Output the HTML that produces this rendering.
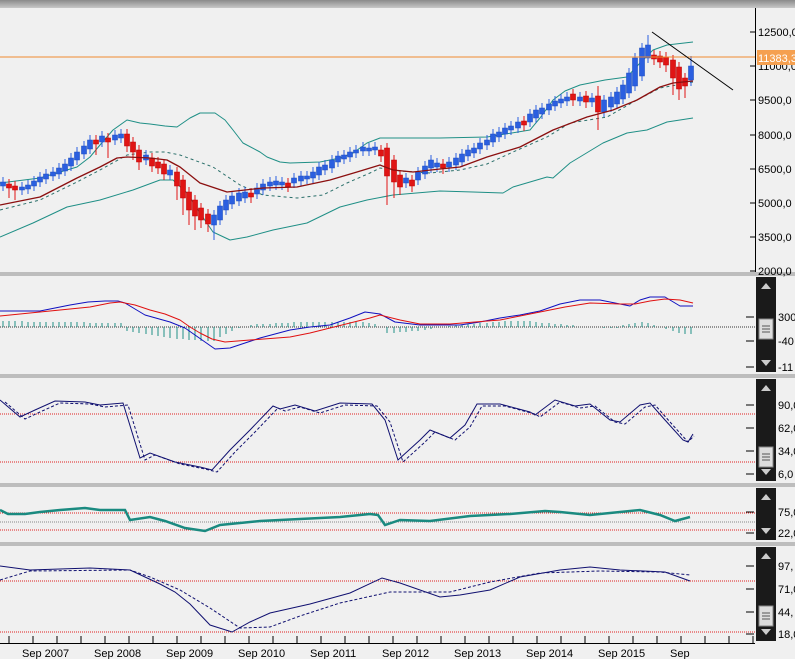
<!DOCTYPE html>
<html><head><meta charset="utf-8"><style>
html,body{margin:0;padding:0;background:#f0f0f0;}
svg{display:block;font-family:"Liberation Sans",sans-serif;}
</style></head><body>
<svg width="795" height="659" xmlns="http://www.w3.org/2000/svg" font-family="Liberation Sans, sans-serif" font-size="11">
<defs><linearGradient id="tg" x1="0" y1="0" x2="0" y2="1"><stop offset="0" stop-color="#8a8a8a"/><stop offset="1" stop-color="#c8c8c8"/></linearGradient></defs>
<rect width="795" height="659" fill="#f0f0f0"/>
<rect width="795" height="8" fill="url(#tg)"/>
<rect x="0" y="272" width="795" height="4" fill="#bdbdbd"/>
<rect x="0" y="374" width="795" height="4" fill="#bdbdbd"/>
<rect x="0" y="483" width="795" height="4" fill="#bdbdbd"/>
<rect x="0" y="542" width="795" height="4" fill="#bdbdbd"/>

<g fill="none" stroke-width="1" stroke-linejoin="round">
<polyline stroke="#1f8f86" points="0,183 40,178 77,167 90,157 100,145 113,130 127,120 140,123 150,124 165,126 177,127 190,118 200,113 215,113 225,120 233,130 243,143 260,152 267,157 280,162 290,163 320,162 340,158 353,153 367,143 380,138 440,138 487,137 530,130 540,118 553,100 565,91 580,85 605,80 627,77 640,63 653,50 667,45 693,42"/>
<polyline stroke="#1f8f86" points="0,237 33,223 67,207 100,200 133,190 160,180 173,180 187,193 200,213 213,232 230,240 247,237 273,230 307,223 340,207 367,200 393,195 440,191 473,192 503,193 513,187 547,177 553,178 570,163 603,143 627,133 647,130 667,122 693,118"/>
<polyline stroke="#2a6f6a" stroke-dasharray="3,3" points="0,210 40,200 77,182 100,170 127,155 150,152 165,152 180,155 213,167 240,185 263,195 297,198 323,195 347,183 370,173 380,168 400,171 430,173 460,170 487,164 513,152 547,137 570,123 607,117 637,100 660,88 693,82"/>
</g>

<path stroke="#2b5fe0" fill="none" d="M3,177V191M22,182V195M28,180V194M34,176V191M40,172V187M46,169V184M53,167V181M59,163V179M65,159V176M71,153V171M77,147V165M84,141V159M90,135V154M102,131V147M115,130V145M121,129V143M146,150V165M170,165V180M214,210V240M220,201V225M226,195V215M232,191V209M239,188V206M245,187V203M257,183V199M263,179V195M270,177V191M276,176V190M282,177V190M294,173V188M301,171V186M307,171V184M313,167V183M319,162V180M325,160V175M332,155V173M338,151V167M344,150V164M350,147V162M356,145V158M363,142V156M369,143V156M375,142V155M406,173V188M418,167V185M425,161V179M431,155V173M437,158V172M449,157V172M456,153V170M462,149V167M468,145V161M474,143V158M480,138V154M487,135V150M493,129V147M499,127V142M505,123V139M511,121V135M518,117V133M530,109V127M536,105V123M542,103V119M549,99V115M555,96V111M561,94V108M567,92V106M580,92V106M592,93V107M604,95V117M611,92V112M617,87V109M623,80V104M629,68V98M635,53V91M642,43V81M648,35V63M691,56V86"/>
<path stroke="#e01515" fill="none" d="M9,179V198M15,181V200M96,135V155M108,133V158M127,129V152M133,137V160M139,145V170M152,153V172M158,157V174M164,159V180M177,167V200M183,175V215M189,187V225M195,195V230M201,203V228M208,209V232M251,188V203M288,178V192M381,145V162M387,143V205M394,155V198M400,170V195M412,175V192M443,159V174M524,116V131M573,89V106M586,91V108M598,86V130M654,50V65M660,51V68M666,52V72M673,55V95M679,62V100M685,73V98"/>
<path fill="#2b5fe0" stroke="#1e4fc0" stroke-width="0.6" d="M0.5,182h5v4h-5zM19.5,187h5v3h-5zM25.5,185h5v4h-5zM31.5,181h5v5h-5zM37.5,177h5v5h-5zM43.5,174h5v5h-5zM50.5,172h5v4h-5zM56.5,168h5v6h-5zM62.5,164h5v7h-5zM68.5,158h5v8h-5zM74.5,152h5v8h-5zM81.5,146h5v8h-5zM87.5,140h5v9h-5zM99.5,136h5v6h-5zM112.5,135h5v5h-5zM118.5,134h5v4h-5zM143.5,155h5v5h-5zM167.5,170h5v5h-5zM211.5,215h5v10h-5zM217.5,206h5v14h-5zM223.5,200h5v10h-5zM229.5,196h5v8h-5zM236.5,193h5v8h-5zM242.5,192h5v6h-5zM254.5,188h5v6h-5zM260.5,184h5v6h-5zM267.5,182h5v4h-5zM273.5,181h5v4h-5zM279.5,182h5v3h-5zM291.5,178h5v5h-5zM298.5,176h5v5h-5zM304.5,176h5v3h-5zM310.5,172h5v6h-5zM316.5,167h5v8h-5zM322.5,165h5v5h-5zM329.5,160h5v8h-5zM335.5,156h5v6h-5zM341.5,155h5v4h-5zM347.5,152h5v5h-5zM353.5,150h5v3h-5zM360.5,147h5v4h-5zM366.5,148h5v3h-5zM372.5,147h5v3h-5zM403.5,178h5v5h-5zM415.5,172h5v8h-5zM422.5,166h5v8h-5zM428.5,160h5v8h-5zM434.5,163h5v4h-5zM446.5,162h5v5h-5zM453.5,158h5v7h-5zM459.5,154h5v8h-5zM465.5,150h5v6h-5zM471.5,148h5v5h-5zM477.5,143h5v6h-5zM484.5,140h5v5h-5zM490.5,134h5v8h-5zM496.5,132h5v5h-5zM502.5,128h5v6h-5zM508.5,126h5v4h-5zM515.5,122h5v6h-5zM527.5,114h5v8h-5zM533.5,110h5v8h-5zM539.5,108h5v6h-5zM546.5,104h5v6h-5zM552.5,101h5v5h-5zM558.5,99h5v4h-5zM564.5,97h5v4h-5zM577.5,97h5v4h-5zM589.5,98h5v4h-5zM601.5,100h5v12h-5zM608.5,97h5v10h-5zM614.5,92h5v12h-5zM620.5,85h5v14h-5zM626.5,73h5v20h-5zM632.5,58h5v28h-5zM639.5,48h5v28h-5zM645.5,45h5v13h-5zM688.5,66h5v14h-5z"/>
<path fill="#e01515" stroke="#c00000" stroke-width="0.6" d="M6.5,184h5v4h-5zM12.5,186h5v4h-5zM93.5,140h5v4h-5zM105.5,138h5v4h-5zM124.5,134h5v12h-5zM130.5,142h5v10h-5zM136.5,150h5v12h-5zM149.5,158h5v8h-5zM155.5,162h5v6h-5zM161.5,164h5v10h-5zM174.5,172h5v14h-5zM180.5,180h5v18h-5zM186.5,192h5v18h-5zM192.5,200h5v16h-5zM198.5,208h5v12h-5zM205.5,214h5v10h-5zM248.5,193h5v4h-5zM285.5,183h5v4h-5zM378.5,150h5v6h-5zM384.5,148h5v28h-5zM391.5,160h5v22h-5zM397.5,175h5v12h-5zM409.5,180h5v6h-5zM440.5,164h5v4h-5zM521.5,121h5v4h-5zM570.5,94h5v6h-5zM583.5,96h5v6h-5zM595.5,96h5v16h-5zM651.5,55h5v4h-5zM657.5,56h5v6h-5zM663.5,57h5v8h-5zM670.5,60h5v18h-5zM676.5,67h5v22h-5zM682.5,78h5v8h-5z"/>

<polyline fill="none" stroke="#8b0f0f" stroke-width="1.3" stroke-linejoin="round" points="0,205 40,197 77,178 100,167 117,158 127,157 150,158 167,160 180,167 200,183 227,192 263,188 297,187 330,180 357,172 380,165 393,170 413,172 440,169 460,167 487,157 520,147 553,130 587,117 613,110 637,100 660,87 673,83 693,81"/>
<line x1="0" y1="57" x2="755" y2="57" stroke="#f08a30"/>
<line x1="652" y1="32" x2="733" y2="90" stroke="#000"/>

<line x1="755.5" y1="8" x2="755.5" y2="272" stroke="#000"/>
<g stroke="#000"><line x1="750" y1="32" x2="756" y2="32"/><line x1="750" y1="66" x2="756" y2="66"/><line x1="750" y1="100" x2="756" y2="100"/><line x1="750" y1="135" x2="756" y2="135"/><line x1="750" y1="169" x2="756" y2="169"/><line x1="750" y1="203" x2="756" y2="203"/><line x1="750" y1="237" x2="756" y2="237"/><line x1="750" y1="271" x2="756" y2="271"/></g>
<g fill="#000"><text x="758" y="36">12500,0</text><text x="758" y="70">11000,0</text><text x="758" y="104">9500,0</text><text x="758" y="139">8000,0</text><text x="758" y="173">6500,0</text><text x="758" y="207">5000,0</text><text x="758" y="241">3500,0</text><text x="758" y="275">2000,0</text></g>
<rect x="757" y="50" width="38" height="15" fill="#f5a050"/>
<text x="758" y="62" fill="#fff">11383,3</text>

<g>
<rect x="756" y="277" width="20" height="95" fill="#1a1a1a"/><polygon points="761,289 766,283 771,289" fill="#ccc"/><polygon points="761,360 766,366 771,360" fill="#ccc"/>
<rect x="759" y="319" width="14" height="20" fill="#ddd" stroke="#888"/><path d="M762,326h8M762,329h8M762,332h8" stroke="#555"/>
<rect x="756" y="379" width="20" height="102" fill="#1a1a1a"/><polygon points="761,391 766,385 771,391" fill="#ccc"/><polygon points="761,469 766,475 771,469" fill="#ccc"/>
<rect x="759" y="447" width="14" height="20" fill="#ddd" stroke="#888"/><path d="M762,454h8M762,457h8M762,460h8" stroke="#555"/>
<rect x="756" y="488" width="20" height="52" fill="#1a1a1a"/><polygon points="761,500 766,494 771,500" fill="#ccc"/><polygon points="761,528 766,534 771,528" fill="#ccc"/>
<rect x="756" y="547" width="20" height="94" fill="#1a1a1a"/><polygon points="761,559 766,553 771,559" fill="#ccc"/><polygon points="761,629 766,635 771,629" fill="#ccc"/>
<rect x="759" y="606" width="14" height="20" fill="#ddd" stroke="#888"/><path d="M762,613h8M762,616h8M762,619h8" stroke="#555"/>
</g>
<g stroke="#000"><path d="M746,317h8M746,341h8M746,367h8M746,405h8M746,428h8M746,451h8M746,474h8M746,512h8M746,533h8M746,566h8M746,589h8M746,612h8M746,634h8"/></g>
<g fill="#000"><text x="778" y="321">300</text><text x="778" y="345">-40</text><text x="778" y="371">-11</text>
<text x="778" y="409">90,0</text><text x="778" y="432">62,0</text><text x="778" y="455">34,0</text><text x="778" y="478">6,0</text>
<text x="778" y="516">75,0</text><text x="778" y="537">22,0</text>
<text x="778" y="570">97,</text><text x="778" y="593">71,0</text><text x="778" y="616">44,</text><text x="778" y="638">18,0</text></g>

<line x1="0" y1="327" x2="755" y2="327" stroke="#333" stroke-dasharray="1,1"/>
<path stroke="#1f8f86" fill="none" d="M3,327v-6M9,327v-6M15,327v-6M22,327v-6M28,327v-5M34,327v-5M40,327v-5M46,327v-5M53,327v-5M59,327v-5M65,327v-5M71,327v-5M77,327v-5M84,327v-5M90,327v-4M96,327v-4M102,327v-4M108,327v-4M115,327v-4M121,327v-4M127,327v4M133,327v5M139,327v6M146,327v7M152,327v8M158,327v9M164,327v10M170,327v11M177,327v12M183,327v12M189,327v13M195,327v13M201,327v14M208,327v14M214,327v14M220,327v10M226,327v7M232,327v4M239,327v1M251,327v-2M257,327v-3M263,327v-3M270,327v-3M276,327v-4M282,327v-4M288,327v-4M294,327v-5M301,327v-5M307,327v-5M313,327v-5M319,327v-5M325,327v-5M332,327v-5M338,327v-5M344,327v-5M350,327v-5M356,327v-5M363,327v-5M369,327v-4M375,327v-3M387,327v6M394,327v6M400,327v5M406,327v5M412,327v4M418,327v4M425,327v3M431,327v2M449,327v-1M456,327v-2M462,327v-2M468,327v-3M474,327v-3M480,327v-4M487,327v-4M493,327v-5M499,327v-5M505,327v-6M511,327v-6M518,327v-6M524,327v-6M530,327v-6M536,327v-5M542,327v-4M549,327v-4M555,327v-3M561,327v-3M567,327v-2M573,327v-2M604,327v1M611,327v1M617,327v1M623,327v-2M629,327v-3M635,327v-4M642,327v-5M648,327v-4M654,327v-2M666,327v2M673,327v4M679,327v6M685,327v7M691,327v7"/>
<polyline fill="none" stroke="#1010c0" stroke-linejoin="round" points="0,311 40,311 70,305 88,302 105,301 118,301 125,303 135,309 145,315 170,322 185,328 195,335 205,342 215,349 230,348 245,343 260,338 275,334 290,330 310,327 330,325 350,318 365,312 380,314 395,322 420,325 460,325 480,322 500,318 520,315 540,311 560,304 580,300 600,300 620,304 630,306 640,300 650,297 665,297 680,306 693,306"/>
<polyline fill="none" stroke="#e01010" stroke-linejoin="round" points="0,316 40,312 90,307 110,303 120,302 135,305 150,310 165,314 180,320 190,327 200,333 212,339 225,342 250,340 290,337 310,333 330,328 350,323 370,318 380,315 400,320 420,324 450,324 475,322 500,320 520,316 540,312 565,307 590,303 620,304 635,304 650,301 665,299 680,300 693,303"/>

<line x1="0" y1="414" x2="755" y2="414" stroke="#e02020" stroke-dasharray="1,1"/>
<line x1="0" y1="462" x2="755" y2="462" stroke="#e02020" stroke-dasharray="1,1"/>
<polyline fill="none" stroke="#101070" points="0,400 20,417 35,410 55,401 85,402 100,405 123,403 140,458 150,453 175,462 200,467 212,470 230,450 250,430 273,406 280,409 295,405 315,411 340,403 372,404 385,420 398,460 420,440 430,430 450,438 465,425 477,404 500,404 530,412 535,415 555,400 575,406 590,404 610,420 620,422 640,405 650,403 665,420 683,440 688,442 693,434"/>
<polyline fill="none" stroke="#101070" stroke-dasharray="3,2" points="5,402 25,419 40,412 60,403 90,404 105,407 128,405 145,460 155,455 180,464 205,469 217,472 235,452 255,432 278,408 285,411 300,407 320,413 345,405 377,406 390,422 403,462 425,442 435,432 455,440 470,427 482,406 505,406 535,414 540,417 560,402 580,408 595,406 615,422 625,424 645,407 655,405 670,422 688,442 694,436"/>

<line x1="0" y1="513" x2="755" y2="513" stroke="#e02020" stroke-dasharray="1,1"/>
<line x1="0" y1="522" x2="755" y2="522" stroke="#888" stroke-dasharray="1,1"/>
<line x1="0" y1="530" x2="755" y2="530" stroke="#e02020" stroke-dasharray="1,1"/>
<polyline fill="none" stroke="#1a8a80" stroke-width="2.5" points="0,510 8,514 25,514 40,512 60,510 85,508 100,510 125,510 130,520 150,517 165,521 185,528 205,531 220,525 260,521 300,519 340,517 370,514 378,515 385,525 400,520 430,521 470,516 510,514 545,511 560,512 590,515 620,512 640,510 660,515 675,521 690,517"/>

<line x1="0" y1="581" x2="755" y2="581" stroke="#e02020" stroke-dasharray="1,1"/>
<line x1="0" y1="632" x2="755" y2="632" stroke="#e02020" stroke-dasharray="1,1"/>
<polyline fill="none" stroke="#101070" points="0,566 30,570 90,568 130,570 145,577 160,584 175,592 190,604 210,625 232,632 250,622 270,613 310,604 350,593 382,578 400,583 440,597 460,595 490,590 520,577 560,570 590,567 620,570 665,572 690,581"/>
<polyline fill="none" stroke="#101070" stroke-dasharray="3,2" points="0,580 30,571 130,570 150,577 180,590 210,608 240,628 270,627 300,616 340,603 390,592 450,592 490,582 540,573 600,571 660,572 690,575"/>

<line x1="0" y1="643.5" x2="755" y2="643.5" stroke="#000"/>
<path stroke="#000" d="M9,636v7M33,636v7M57,636v7M81,636v7M105,636v7M129,636v7M153,636v7M177,636v7M201,636v7M225,636v7M249,636v7M273,636v7M297,636v7M321,636v7M345,636v7M369,636v7M393,636v7M417,636v7M441,636v7M465,636v7M489,636v7M513,636v7M537,636v7M561,636v7M585,636v7M609,636v7M633,636v7M657,636v7M681,636v7M705,636v7M729,636v7M753,636v7"/>
<g fill="#000"><text x="22" y="657">Sep 2007</text><text x="94" y="657">Sep 2008</text><text x="166" y="657">Sep 2009</text><text x="238" y="657">Sep 2010</text><text x="310" y="657">Sep 2011</text><text x="382" y="657">Sep 2012</text><text x="454" y="657">Sep 2013</text><text x="526" y="657">Sep 2014</text><text x="598" y="657">Sep 2015</text><text x="670" y="657">Sep</text></g>
</svg>
</body></html>
